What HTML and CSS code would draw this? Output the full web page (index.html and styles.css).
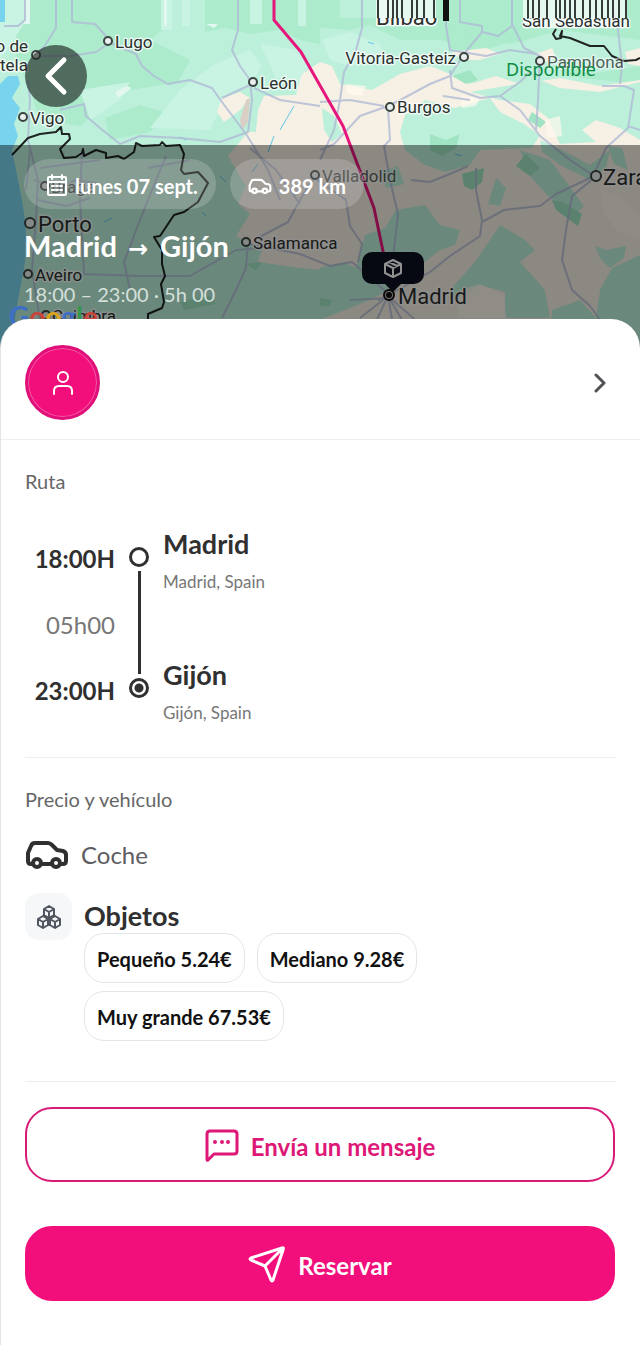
FILE: index.html
```html
<!DOCTYPE html>
<html lang="es">
<head>
  <meta charset="UTF-8">
  <meta name="viewport" content="width=device-width, initial-scale=1">
  <title>Madrid → Gijón</title>
  <link rel="stylesheet" href="styles.css">
</head>
<body>
  <header class="hero">
    <svg class="map" viewBox="0 0 640 348" preserveAspectRatio="xMidYMin slice" aria-hidden="true">
      <defs>
        <clipPath id="labelFeet"><rect x="360" y="18" width="280" height="16"/></clipPath>
      </defs>
      <rect width="640" height="348" fill="#bdf0da"/>

      <!-- darker forest -->
      <g fill="#acebcc">
        <path d="M16 0H162L165 28 150 40 190 60 178 82 120 92 100 110 80 126 40 120 30 90 16 60Z"/>
        <path d="M205 0H320V44L300 40 280 30 250 34 225 28 205 32Z"/>
        <path d="M320 28 350 30 370 25 400 40 440 40 470 48 520 42 560 30 640 40V0H390V18H340V0H320Z"/>
        <path d="M105 118 140 105 165 112 150 132 110 140Z"/>
        <path d="M446 30 470 34 500 46 470 52 448 48ZM560 60 590 74 640 66V84L600 80 566 76Z"/>
      </g>
      <!-- light hills -->
      <g fill="#c9f3e3">
        <path d="M0 0H24V24L0 60Z"/>
        <path d="M180 90 215 64 250 50 262 66 250 86 226 96 210 130 150 128Z"/>
        <path d="M260 44 296 50 310 64 300 84 276 78Z"/>
        <path d="M322 40 350 32 380 44 384 60 350 66 330 60Z"/>
        <path d="M80 90 130 82 120 100 90 120Z"/>
        <path d="M161 0H172V30H161ZM182 0H190V26H182ZM250 0H262V24H250ZM298 0H306V26H298Z"/>
      </g>
      <g fill="#e1f7ef">
        <path d="M24 0H30V24H24ZM164 0H167V26H164Z"/>
        <path d="M115 92 126 86 132 88 118 98ZM206 24 218 24 214 28Z"/>
      </g>
      <!-- plateau -->
      <path d="M320 62 332 66 340 84 372 90 400 74 430 66 450 74 470 84 496 76 520 84 560 78 600 86 640 80V348H320L322 270 300 268 258 262 262 250 236 236 250 214 238 204 246 186 228 156 248 132 256 132 258 110 264 96 296 95 302 74Z" fill="#f7f0e5"/>
      <g fill="#f7f0e5">
        <path d="M217 112 222 98 240 92 250 98 240 110 224 122Z"/>
        <path d="M452 52 486 48 500 54 480 60 462 60ZM536 54 552 48 556 58 545 62Z"/>
        <path d="M625 52 640 48V66L628 64Z"/>
      </g>
      <path d="M246 100 250 98 248 122 242 130 240 120Z" fill="#d9cfc4"/>
      <!-- valleys -->
      <g fill="#bdf0da">
        <path d="M400 132 405 115 425 100 455 108 490 98 500 112 524 124 540 135 532 148 480 150 470 165 445 172 425 165 405 150Z"/>
        <path d="M470 92 540 80 560 88 600 92 640 82V140L620 128 596 120 582 130 596 142 560 144 548 118 530 104 500 100Z"/>
        <path d="M396 210 425 205 440 225 460 230 455 245 440 250 425 262 400 262 388 290 370 300 340 312 320 320V268L344 262 356 268 365 235 385 228Z"/>
        <path d="M500 225 525 240 535 250 520 262 545 290 550 318H505V292L480 285 455 300 450 290 475 262Z"/>
        <path d="M540 140 562 150 590 165 610 150 606 168 590 180 560 165 542 152Z"/>
        <path d="M520 150 550 160 584 206 574 216 548 196 530 176Z"/>
        <path d="M600 290 612 268 640 255V348H550L552 310 580 300 596 318Z"/>
        <path d="M382 172 398 166 404 184 386 188Z"/>
        <path d="M496 178 506 188 500 206 488 204Z"/>
        <path d="M608 146 622 148 628 170 614 164Z"/>
        <path d="M322 108 334 116 342 134 332 142 324 130Z"/>
        <path d="M595 246 606 250 626 246 624 258 610 268 600 258Z"/>
      </g>
      <g fill="#a0e4c3">
        <path d="M462 174 484 168 482 182 472 190 464 186Z"/>
        <path d="M552 200 562 202 582 214 578 226 556 210Z"/>
        <path d="M430 134 446 140 460 134 456 148 442 156 430 150Z"/>
        <path d="M452 76 470 70 478 80 466 84Z"/>
        <path d="M516 166 526 154 540 168 530 176Z"/>
        <path d="M320 298 332 300 330 306 320 306Z"/>
        <path d="M532 112 546 122 540 128 528 120Z"/>
        <path d="M180 302 210 296 216 304 184 310ZM246 264 262 262 256 270Z"/>
      </g>
      <g fill="#fff9f0" opacity=".7">
        <path d="M545 120 560 116 562 136 548 138Z"/>
        <path d="M460 290 480 284 504 296 506 318H458Z"/>
        <path d="M460 96 480 98 476 106 462 108ZM346 84 366 86 362 96 348 94Z"/>
        <path d="M600 190 624 200 640 216V240L618 232 604 214Z"/>
      </g>

      <!-- ocean -->
      <path d="M0 0H5V22H0ZM0 84 8 76 18 76 20 84 12 98 20 108 14 124 18 136 12 150 16 170 22 200 26 226 25 262 18 300 10 348H0Z" fill="#78d4ee"/>
      <path d="M294 106 280 130M274 136 268 152M258 164 252 172M220 176 226 182M104 222 112 218M202 212 206 216M180 137 186 140M368 42 374 44M455 154 462 156" stroke="#5fc6e8"/>

      <!-- roads -->
      <g fill="none" stroke="#b0bbd6" stroke-width="2" opacity=".8">
        <path d="M25 0V20L18 26H4M56 0V28L46 44 38 54M72 0V22L95 24 106 36M108 44 96 52 70 56 40 56"/>
        <path d="M108 42 136 54 142 66 154 76 168 84 190 80 212 88 222 102 234 118 246 134 256 150 268 170 280 200"/>
        <path d="M238 0V30L232 50 240 66 250 80 252 100 248 132 220 142 180 138 140 136 120 144 100 128 86 116 84 104 60 110"/>
        <path d="M252 84 222 98M254 88 280 100 320 106M28 80 30 100 28 140 38 180 36 220 32 270 40 320"/>
        <path d="M362 0V28L356 50 344 72 340 100 334 130 320 160M460 0V22L482 26V32L464 54 450 76 430 84 404 98 388 106 360 116 334 144 320 150"/>
        <path d="M482 32 498 36 512 26V0M512 24 524 48 540 56 538 100 536 130M446 0V26L450 50 486 56 510 50 536 54"/>
        <path d="M450 70 452 88 480 98 500 96 520 82 530 72M443 96 470 100M500 96 520 110 540 136 570 160 594 176M320 102 350 100 384 106"/>
        <path d="M388 108 390 140 384 146 390 180 398 214 394 250 390 290M476 168 476 190 482 220 480 236 450 256 430 272 394 292M411 180 430 182 450 174 468 166"/>
        <path d="M594 176 556 194 540 206 504 210 482 222M594 178 572 196 566 230 562 260 572 290 590 306 600 320M594 174 606 148 628 128 634 90 624 86 602 86M628 126 640 130"/>
        <path d="M315 176 300 200 288 222 254 240M315 178 346 200 350 226 362 244 358 262M250 244 300 254 330 266 352 262 386 292M250 148 276 170 300 204"/>
        <path d="M34 180 60 188 76 180 100 184M40 168 70 164 100 160M38 200 66 206 90 198M82 152 80 200 82 236 84 274 140 276 190 276 236 250 262 248"/>
        <path d="M166 156 152 190 140 220 124 262 130 290M148 168 190 160M248 244 246 268 236 290 222 318M30 150 26 190"/>
        <path d="M388 296 360 318M388 296 372 330M388 296 394 330M388 296 420 324M388 298 350 300M388 296 378 300M388 296 408 330M612 0 618 30 622 66 620 84"/>
      </g>

      <!-- borders -->
      <g fill="none" stroke="#1f2422" stroke-width="2">
        <path d="M12 155 28 138 40 134 56 132 61 127 62 134 69 134 70 139 60 149 64 158 76 157 82 153 83 149 84 156 96 150 106 153 106 158 118 156 124 159 134 152 136 143 142 146 160 145 162 142 166 146 180 145 184 154 181 170 184 174 198 172 208 183 198 202 184 212 174 215 160 236 154 237 162 250 162 264 165 276 161 284 164 302 162 308 148 314V320"/>
        <path d="M556 29 553 34 556 39 561 38 562 31 560 36 570 38 580 42 590 46 604 46 612 56 624 61 636 60 640 58"/>
      </g>

      <!-- smeared top edge -->
      <g stroke="#fff" opacity=".7">
        <path d="M406 0V26" stroke-width="60"/>
        <path d="M575 0V28" stroke-width="104"/>
      </g>
      <g stroke="#353d3a">
        <path d="M378 0V19M388 0V19M393 0V19M397 0V19M402 0V19M412 0V19M417 0V19M424 0V19M434 0V19M528 0V19M533 0V19M539 0V19M547 0V19M556 0V19M560 0V19M565 0V19M570 0V19M575 0V19M583 0V19M590 0V19M596 0V19M602 0V19M608 0V19M613 0V19M619 0V19M626 0V19" stroke-width="2"/>
        <path d="M446 0V21" stroke="#111" stroke-width="6"/>
      </g>
      <g clip-path="url(#labelFeet)" class="map-label">
        <text x="376" y="25" font-size="22">Bilbao</text>
        <text x="522" y="27" font-size="17">San Sebastián</text>
      </g>

      <!-- route -->
      <path d="M274 0V20L301 52 343 126 374 208 384 256" fill="none" stroke="#e6177c" stroke-width="3"/>

      <!-- cities -->
      <g fill="#e8efec" stroke="#3c4441" stroke-width="2">
        <circle cx="108" cy="41" r="4"/><circle cx="36" cy="55" r="4"/><circle cx="23" cy="117" r="4"/>
        <circle cx="253" cy="82" r="4"/><circle cx="464" cy="57" r="4"/><circle cx="390" cy="107" r="4"/>
        <circle cx="540" cy="61" r="4"/><circle cx="45" cy="186" r="4"/><circle cx="315" cy="175" r="4"/>
        <circle cx="30" cy="223" r="5"/><circle cx="246" cy="242" r="4"/><circle cx="28" cy="274" r="4"/>
        <circle cx="596" cy="176" r="5"/><circle cx="46" cy="315" r="4"/>
      </g>
      <g class="map-label" font-size="17">
        <text x="115" y="48">Lugo</text>
        <text x="28" y="52" text-anchor="end">Santiago de</text>
        <text x="28" y="71" text-anchor="end">Compostela</text>
        <text x="30" y="124">Vigo</text>
        <text x="260" y="89">León</text>
        <text x="456" y="64" text-anchor="end">Vitoria-Gasteiz</text>
        <text x="397" y="113">Burgos</text>
        <text x="547" y="68" class="faded">Pamplona</text>
        <text x="51" y="193" class="faded">Braga</text>
        <text x="322" y="182" class="faded">Valladolid</text>
        <text x="253" y="249">Salamanca</text>
        <text x="35" y="281">Aveiro</text>
        <text x="52" y="322">Coimbra</text>
        <text x="38" y="232" font-size="22">Porto</text>
        <text x="603" y="185" font-size="22">Zaragoza</text>
        <text x="398" y="304" font-size="22">Madrid</text>
      </g>

      <!-- pickup marker -->
      <path d="M372 252H414A10 10 0 0 1 424 262V274A10 10 0 0 1 414 284H401L393 292 385 284H372A10 10 0 0 1 362 274V262A10 10 0 0 1 372 252Z" fill="#0b1120"/>
      <circle cx="389" cy="295" r="5" fill="#c9c5bf" stroke="#111" stroke-width="2"/>
      <circle cx="389" cy="295" r="3" fill="#111"/>
      <path d="M393 260 401 264V273L393 277 385 273V264ZM385 264 393 268 401 264M393 268V277M389 262 397 266" fill="none" stroke="#fff" stroke-width="2"/>
    </svg>

    <button class="back" type="button" aria-label="Volver">
      <svg viewBox="0 0 24 40" width="24" height="40"><path d="M20 4 4 20 20 36"/></svg>
    </button>
    <span class="status">Disponible</span>

    <div class="summary">
      <span class="google" aria-hidden="true"><i class="b">G</i><i class="r">o</i><i class="y">o</i><i class="b">g</i><i class="g">l</i><i class="r">e</i></span>
      <div class="tags">
        <span class="tag tag-date">
          <svg viewBox="0 0 22 24" width="22" height="24"><path d="M3 3H19A1 1 0 0 1 20 4V20A1 1 0 0 1 19 21H3A1 1 0 0 1 2 20V4A1 1 0 0 1 3 3ZM2 8H20M6 1V5M16 1V5M6 12H8M10 12H12M14 12H16M6 16H8M10 16H12M14 16H16"/></svg>
          lunes 07 sept.
        </span>
        <span class="tag">
          <svg viewBox="0 0 44 30" width="24" height="17" class="car"><path d="M8 24H6Q3 24 3 21V13L6 6Q7 3 10 3H23Q25 3 27 5L32 10 38 11Q41 12 41 15V21Q41 24 38 24H35M16 24H27"/><circle cx="12" cy="23" r="4"/><circle cx="31" cy="23" r="4"/></svg>
          389 km
        </span>
      </div>
      <h1>Madrid <span class="arrow">→</span> Gijón</h1>
      <p class="when">18:00 – 23:00 · 5h 00</p>
    </div>
  </header>

  <main class="sheet">
    <a class="profile" href="#perfil" aria-label="Ver perfil">
      <span class="avatar">
        <svg viewBox="0 0 24 26" width="24" height="26"><circle cx="12" cy="7" r="5"/><path d="M3 24V21Q3 16 8 16H16Q21 16 21 21V24"/></svg>
      </span>
      <svg class="chevron" viewBox="0 0 12 20" width="12" height="20"><path d="M2 2 10 10 2 18"/></svg>
    </a>

    <section class="section">
      <h2>Ruta</h2>
      <div class="route">
        <div class="times">
          <strong>18:00H</strong>
          <span>05h00</span>
          <strong>23:00H</strong>
        </div>
        <div class="rail">
          <span class="dot"></span>
          <span class="line"></span>
          <span class="dot dot-end"></span>
        </div>
        <div class="stops">
          <div class="stop">
            <h3>Madrid</h3>
            <p>Madrid, Spain</p>
          </div>
          <div class="stop">
            <h3>Gijón</h3>
            <p>Gijón, Spain</p>
          </div>
        </div>
      </div>
    </section>

    <section class="section section-price">
      <h2>Precio y vehículo</h2>
      <div class="vehicle">
        <svg viewBox="0 0 44 30" width="44" height="30" class="car"><path d="M8 24H6Q3 24 3 21V13L6 6Q7 3 10 3H23Q25 3 27 5L32 10 38 11Q41 12 41 15V21Q41 24 38 24H35M16 24H27"/><circle cx="12" cy="23" r="4"/><circle cx="31" cy="23" r="4"/></svg>
        <span>Coche</span>
      </div>
      <div class="objects">
        <span class="cubes">
          <svg viewBox="0 0 24 24" width="24" height="24"><path d="M12 1 17 4V10L12 13 7 10V4ZM7 4 12 7 17 4M12 7V13M6 11 11 14V20L6 23 1 20V14ZM1 14 6 17 11 14M6 17V23M18 11 23 14V20L18 23 13 20V14ZM13 14 18 17 23 14M18 17V23M7 10 6 11M17 10 18 11M11 14 12 13 13 14M11 20H13"/></svg>
        </span>
        <div class="objects-body">
          <h3>Objetos</h3>
          <ul class="prices">
            <li>Pequeño 5.24€</li>
            <li>Mediano 9.28€</li>
            <li>Muy grande 67.53€</li>
          </ul>
        </div>
      </div>
    </section>

    <div class="actions">
      <button class="btn btn-outline" type="button">
        <svg viewBox="0 0 34 38" width="34" height="38"><path d="M5 3H29Q32 3 32 6V23Q32 26 29 26H9L3 32Q2 33 2 31V6Q2 3 5 3Z"/><path class="dots" d="M10 14H10M17 14H17M23 14H23"/></svg>
        Envía un mensaje
      </button>
      <button class="btn btn-solid" type="button">
        <svg viewBox="0 0 38 42" width="38" height="42"><path d="M34 3 3 13Q1 14 3 15L17 21 23 35Q24 37 25 35L35 5Q36 2 34 3ZM17 21 34 4"/></svg>
        Reservar
      </button>
    </div>
  </main>
</body>
</html>
```

FILE: styles.css
```css
* {
  box-sizing: border-box;
}

body {
  margin: 0;
  background: #fff;
  color: #303030;
  font-family: Lato, sans-serif;
}

h1, h2, h3, p, ul {
  margin: 0;
  padding: 0;
}

svg {
  flex-shrink: 0;
  fill: none;
  stroke: currentColor;
  stroke-linecap: round;
  stroke-linejoin: round;
}

button {
  font-family: inherit;
  cursor: pointer;
}

/* Map header */
.hero {
  position: relative;
  height: 348px;
  overflow: hidden;
}

.map {
  display: block;
  width: 100%;
  height: 100%;
  stroke: none;
  stroke-linecap: butt;
}

.map-label {
  fill: #2b302e;
  stroke: #ffffffb0;
  stroke-width: 3px;
  paint-order: stroke;
  font-family: Roboto, sans-serif;
}

.map-label .faded {
  opacity: 0.75;
}

.back {
  position: absolute;
  top: 45px;
  left: 25px;
  display: flex;
  align-items: center;
  justify-content: center;
  width: 62px;
  height: 62px;
  padding: 0;
  border: 0;
  border-radius: 50%;
  background: rgba(30, 40, 36, 0.65);
  color: #fff;
}

.back svg {
  stroke-width: 5px;
}

.status {
  position: absolute;
  top: 57px;
  right: 44px;
  color: #0c8a43;
  font-family: "Noto Sans", sans-serif;
  font-size: 18px;
  line-height: 24px;
}

.summary {
  position: absolute;
  right: 0;
  bottom: 0;
  left: 0;
  height: 203px;
  padding: 14px 24px 0;
  background: rgba(0, 0, 0, 0.43);
  color: #fff;
}

.tags {
  display: flex;
  gap: 14px;
}

.tag {
  display: flex;
  align-items: center;
  gap: 7px;
  height: 50px;
  padding: 4px 18px 0;
  border-radius: 25px;
  background: rgba(255, 255, 255, 0.18);
  font-size: 20px;
  font-weight: 700;
}

.tag-date {
  padding-left: 22px;
}

.tag svg {
  stroke-width: 2px;
}

.tag .car {
  stroke-width: 4px;
}

.summary h1 {
  position: relative;
  margin-top: 19px;
  font-size: 29px;
  line-height: 36px;
}

.arrow {
  margin: 0 5px 0 4px;
  font-family: "Noto Sans", "DejaVu Sans", sans-serif;
  font-size: 24px;
  line-height: 24px;
}

.when {
  position: relative;
  margin-top: 16px;
  color: #d5e0db;
  font-size: 20px;
  line-height: 28px;
}

.google {
  position: absolute;
  top: 155px;
  left: 9px;
  font-size: 28px;
  font-weight: 700;
  line-height: 32px;
}

.google i {
  font-style: normal;
}

.google .b { color: #3f6fc4; }
.google .r { color: #c9453b; }
.google .y { color: #d9a520; }
.google .g { color: #36974f; }

/* Bottom sheet */
.sheet {
  position: relative;
  margin-top: -29px;
  border-left: 1px solid #e4e4e4;
  border-radius: 29px 29px 0 0;
  background: #fff;
}

.profile {
  display: flex;
  align-items: center;
  justify-content: space-between;
  padding: 26px 34px 19px 24px;
  border-bottom: 1px solid #eee;
  color: #505055;
}

.avatar {
  display: flex;
  align-items: center;
  justify-content: center;
  width: 75px;
  height: 75px;
  border: 3px solid #e0107a;
  border-radius: 50%;
  background: #f20f7b;
  box-shadow: inset 0 0 0 1px #f65ca5;
  color: #fff;
}

.avatar svg {
  stroke-width: 2px;
}

.chevron {
  stroke-width: 3px;
}

.section {
  margin: 0 24px;
  padding: 29px 0 32px;
  border-bottom: 1px solid #eee;
}

.section h2 {
  color: #666;
  font-size: 20px;
  font-weight: 400;
  line-height: 24px;
}

.section h3 {
  font-size: 27px;
  line-height: 30px;
}

.route {
  display: flex;
  align-items: flex-start;
  margin-top: 36px;
}

.times {
  display: flex;
  flex-direction: column;
  gap: 38px;
  width: 90px;
  padding-top: 16px;
  font-size: 24px;
  line-height: 28px;
  text-align: right;
}

.times span {
  color: #777;
}

.rail {
  display: flex;
  flex-direction: column;
  align-items: center;
  gap: 4px;
  width: 48px;
  padding-top: 18px;
}

.dot {
  width: 20px;
  height: 20px;
  border: 3px solid #303030;
  border-radius: 50%;
}

.dot-end {
  background: radial-gradient(circle, #303030 4px, #fff 5px);
}

.line {
  width: 3px;
  height: 103px;
  background: #303030;
}

.stops {
  display: flex;
  flex-direction: column;
  gap: 66px;
}

.stop p {
  margin-top: 11px;
  color: #777;
  font-size: 17px;
  line-height: 24px;
}

.section-price {
  padding-bottom: 40px;
}

.vehicle {
  display: flex;
  align-items: center;
  gap: 12px;
  margin-top: 28px;
  font-size: 24px;
  line-height: 32px;
}

.vehicle span {
  color: #5c5c60;
}

.vehicle svg {
  stroke-width: 4px;
}

.objects {
  display: flex;
  align-items: flex-start;
  gap: 12px;
  margin-top: 22px;
}

.cubes {
  display: flex;
  align-items: center;
  justify-content: center;
  width: 47px;
  height: 47px;
  border-radius: 14px;
  background: #f6f7f9;
  color: #505660;
}

.cubes svg {
  stroke-width: 2px;
}

.objects-body {
  flex: 1;
  padding-top: 8px;
}

.prices {
  display: flex;
  flex-wrap: wrap;
  gap: 8px 12px;
  margin-top: 2px;
  list-style: none;
}

.prices li {
  padding: 13px 12px 11px;
  border: 1px solid #e3e6e8;
  border-radius: 20px;
  color: #111;
  font-size: 20px;
  font-weight: 700;
  line-height: 24px;
}

.actions {
  display: flex;
  flex-direction: column;
  gap: 44px;
  padding: 25px 25px 45px 24px;
}

.btn {
  display: flex;
  align-items: center;
  justify-content: center;
  gap: 12px;
  height: 75px;
  padding: 4px 24px 0;
  border: 2px solid #d81b77;
  border-radius: 27px;
  font-size: 24px;
  font-weight: 700;
}

.btn svg {
  stroke-width: 3px;
}

.btn .dots {
  stroke-width: 4px;
}

.btn-outline {
  background: #fff;
  color: #dd1877;
}

.btn-solid {
  border-color: #f20f7b;
  background: #f20f7b;
  color: #fff;
}
```
